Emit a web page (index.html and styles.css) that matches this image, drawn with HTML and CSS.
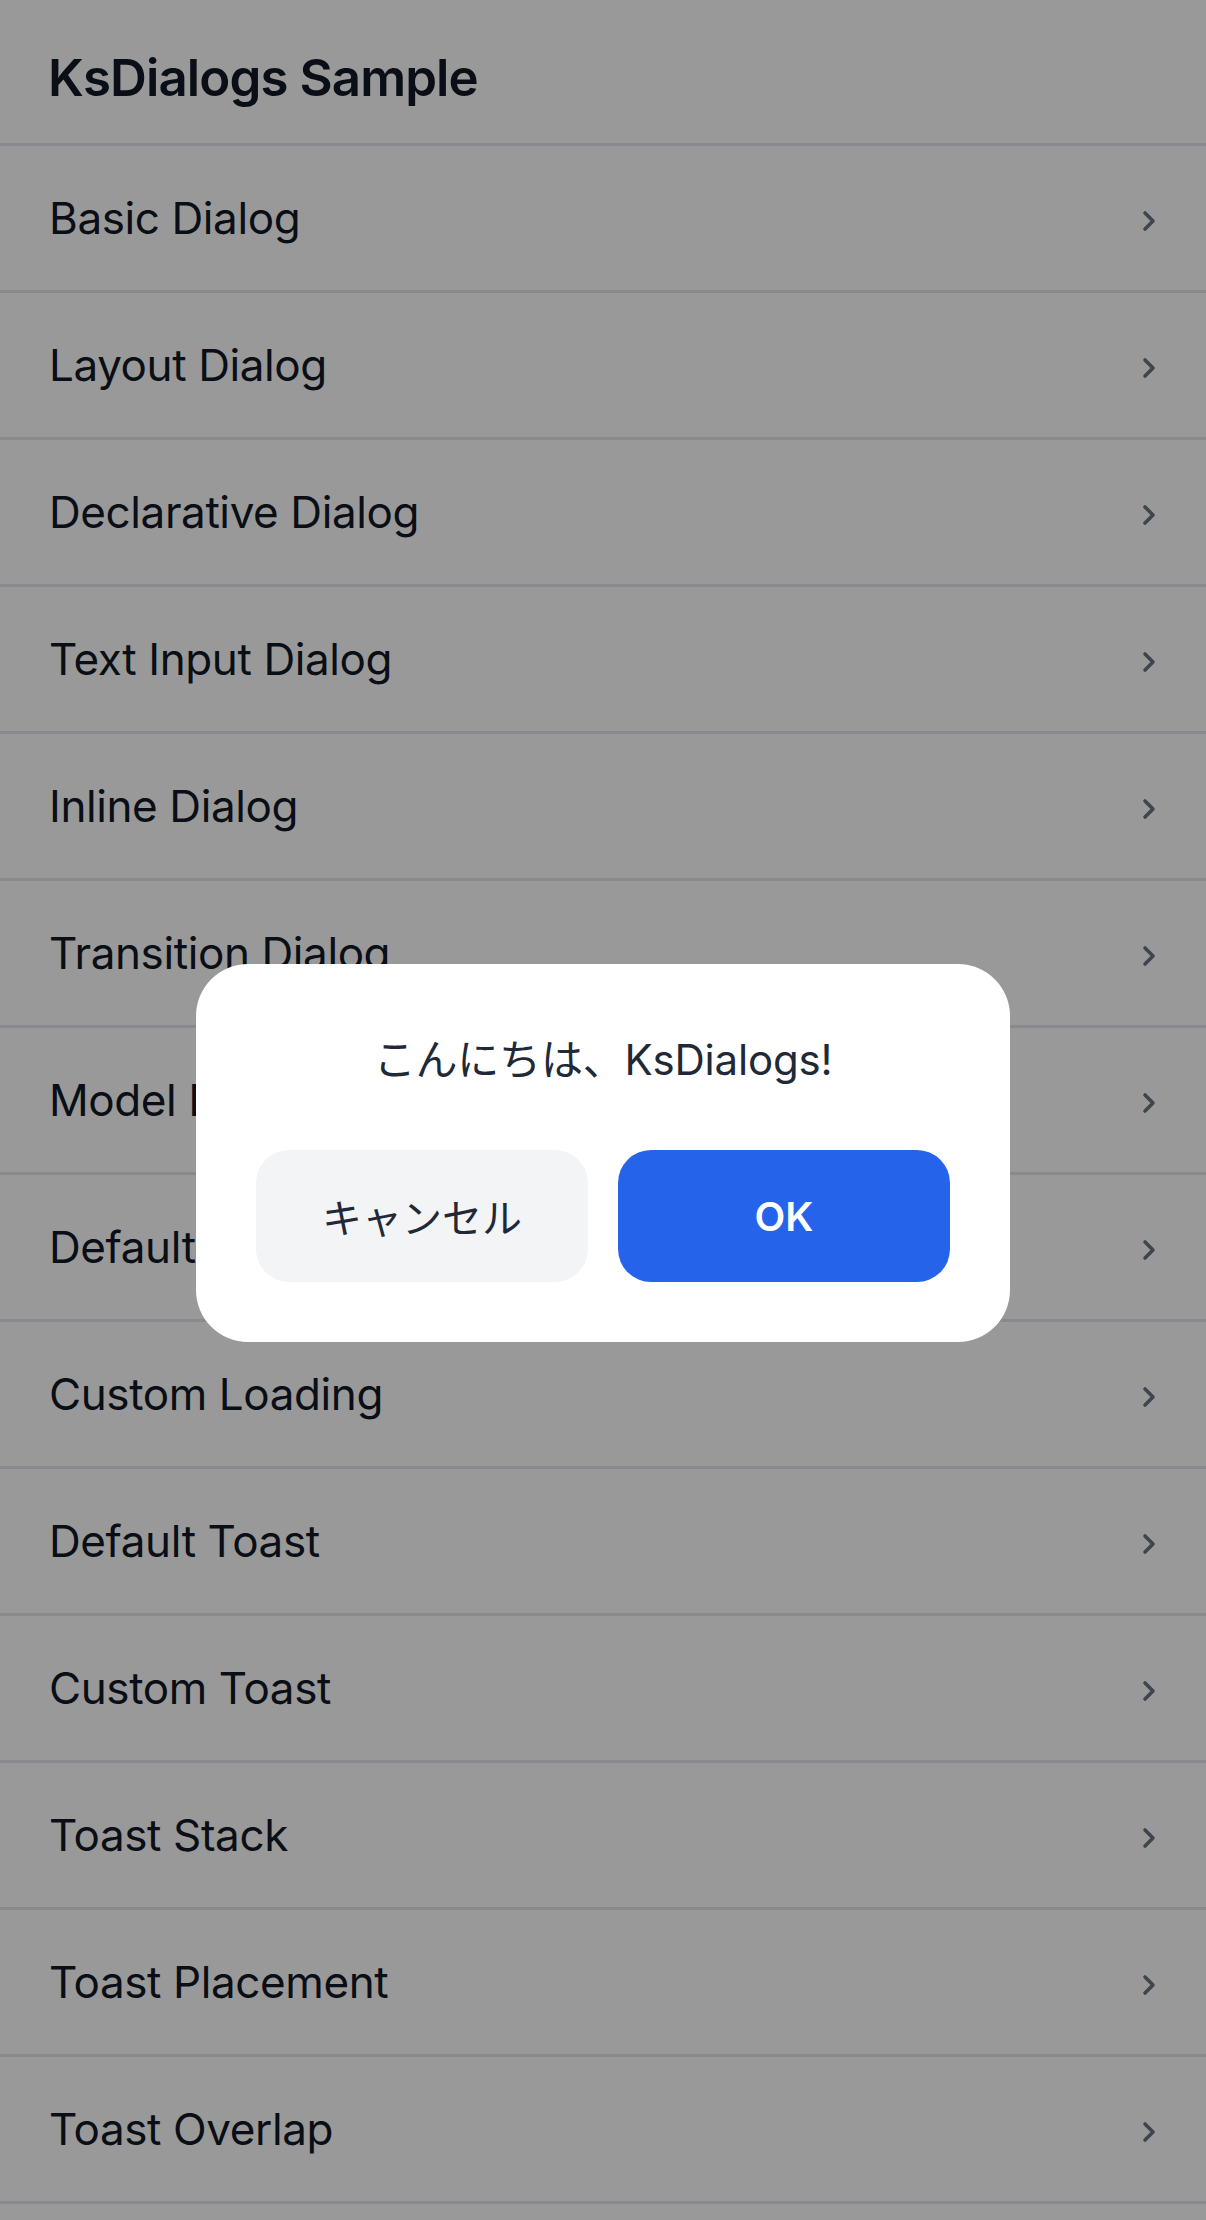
FILE: index.html
```html
<!DOCTYPE html>
<html lang="ja">
<head>
<meta charset="utf-8">
<title>KsDialogs Sample</title>
<link rel="stylesheet" href="styles.css">
</head>
<body>
<div class="screen">
  <header class="header"><h1 class="title">KsDialogs Sample</h1></header>
  <ul class="list">
    <li class="row"><span class="label">Basic Dialog</span><svg class="chev" viewBox="0 0 14 22"><path d="M3 3 L11 11 L3 19"/></svg></li>
    <li class="row"><span class="label">Layout Dialog</span><svg class="chev" viewBox="0 0 14 22"><path d="M3 3 L11 11 L3 19"/></svg></li>
    <li class="row"><span class="label">Declarative Dialog</span><svg class="chev" viewBox="0 0 14 22"><path d="M3 3 L11 11 L3 19"/></svg></li>
    <li class="row"><span class="label">Text Input Dialog</span><svg class="chev" viewBox="0 0 14 22"><path d="M3 3 L11 11 L3 19"/></svg></li>
    <li class="row"><span class="label">Inline Dialog</span><svg class="chev" viewBox="0 0 14 22"><path d="M3 3 L11 11 L3 19"/></svg></li>
    <li class="row"><span class="label">Transition Dialog</span><svg class="chev" viewBox="0 0 14 22"><path d="M3 3 L11 11 L3 19"/></svg></li>
    <li class="row"><span class="label">Model Dialog</span><svg class="chev" viewBox="0 0 14 22"><path d="M3 3 L11 11 L3 19"/></svg></li>
    <li class="row"><span class="label">Default Loading</span><svg class="chev" viewBox="0 0 14 22"><path d="M3 3 L11 11 L3 19"/></svg></li>
    <li class="row"><span class="label">Custom Loading</span><svg class="chev" viewBox="0 0 14 22"><path d="M3 3 L11 11 L3 19"/></svg></li>
    <li class="row"><span class="label">Default Toast</span><svg class="chev" viewBox="0 0 14 22"><path d="M3 3 L11 11 L3 19"/></svg></li>
    <li class="row"><span class="label">Custom Toast</span><svg class="chev" viewBox="0 0 14 22"><path d="M3 3 L11 11 L3 19"/></svg></li>
    <li class="row"><span class="label">Toast Stack</span><svg class="chev" viewBox="0 0 14 22"><path d="M3 3 L11 11 L3 19"/></svg></li>
    <li class="row"><span class="label">Toast Placement</span><svg class="chev" viewBox="0 0 14 22"><path d="M3 3 L11 11 L3 19"/></svg></li>
    <li class="row"><span class="label">Toast Overlap</span><svg class="chev" viewBox="0 0 14 22"><path d="M3 3 L11 11 L3 19"/></svg></li>
  </ul>
</div>
<div class="overlay">
  <div class="dialog" role="dialog">
    <p class="message">こんにちは、KsDialogs!</p>
    <div class="actions">
      <button class="btn btn-cancel">キャンセル</button>
      <button class="btn btn-ok">OK</button>
    </div>
  </div>
</div>
</body>
</html>
```
FILE: styles.css
```css
* { box-sizing: border-box; }
html, body {
  margin: 0;
  padding: 0;
  background: #ffffff;
  height: 2220px;
  overflow: hidden;
}
body {
  font-family: Inter, "Noto Sans CJK JP", sans-serif;
  color: #111827;
}
.screen {
  width: 1206px;
}
.header {
  height: 146px;
  padding: 12px 48px 0;
  display: flex;
  align-items: center;
  border-bottom: 3px solid #e5e7eb;
}
.title {
  margin: 0;
  font-size: 51px;
  font-weight: 600;
  letter-spacing: -0.9px;
  color: #111827;
}
.list {
  list-style: none;
  margin: 0;
  padding: 0;
}
.row {
  height: 147px;
  padding: 0 50px 0 49px;
  display: flex;
  align-items: center;
  justify-content: space-between;
  border-bottom: 3px solid #e5e7eb;
}
.label {
  font-size: 44px;
  letter-spacing: -0.4px;
  color: #111827;
}
.chev {
  width: 14px;
  height: 22px;
  margin-top: 6px;
  fill: none;
  stroke: #6b7280;
  stroke-width: 3.6;
  stroke-linecap: round;
  stroke-linejoin: round;
}
.overlay {
  position: fixed;
  inset: 0;
  background: rgba(0, 0, 0, 0.4);
  display: flex;
  align-items: center;
  justify-content: center;
  padding-top: 86px;
}
.dialog {
  width: 814px;
  background: #ffffff;
  border-radius: 52px;
  padding: 60px;
}
.message {
  margin: 0 0 60px;
  padding-top: 6px;
  font-size: 42px;
  line-height: 60px;
  text-align: center;
  color: #1f2937;
  letter-spacing: -0.2px;
}
.actions {
  display: flex;
  gap: 30px;
}
.btn {
  flex: 1;
  height: 132px;
  border: none;
  border-radius: 33px;
  font-family: Inter, "Noto Sans CJK JP", sans-serif;
  font-size: 40px;
  padding: 0;
}
.btn-cancel {
  background: #f3f4f6;
  color: #1f2937;
}
.btn-ok {
  background: #2563eb;
  color: #ffffff;
  font-weight: 600;
}
```
